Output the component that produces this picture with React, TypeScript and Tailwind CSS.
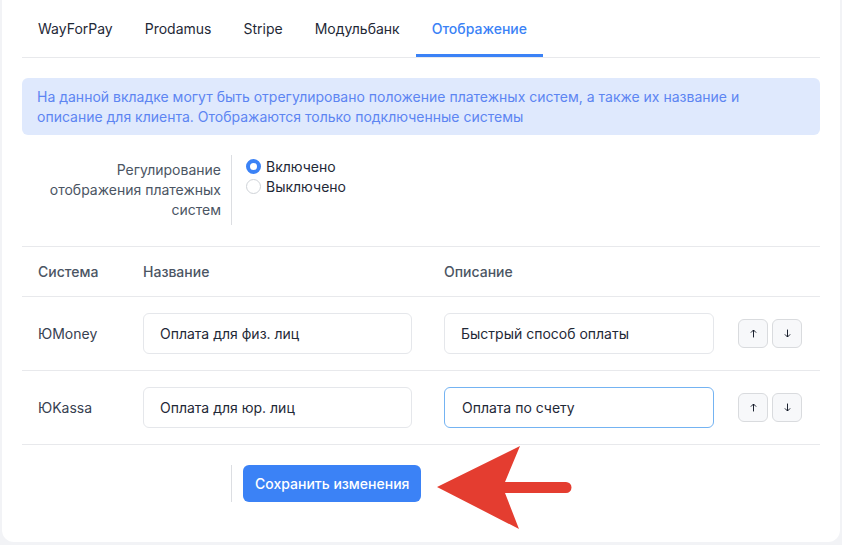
import { useState } from "react";

const tabs = ["WayForPay", "Prodamus", "Stripe", "Модульбанк", "Отображение"];

const rows = [
    { system: "ЮMoney", name: "Оплата для физ. лиц", desc: "Быстрый способ оплаты", focused: false },
    { system: "ЮKassa", name: "Оплата для юр. лиц", desc: "Оплата по счету", focused: true },
];

function Radio({ checked, label, onClick }: { checked: boolean; label: string; onClick: () => void }) {
    return (
        <label className="flex items-center gap-[5px] h-[20px] cursor-pointer" onClick={onClick}>
            <span
                className={
                    checked
                        ? "w-[15px] h-[15px] rounded-full border-[4px] border-[#3b82f6] bg-white"
                        : "w-[15px] h-[15px] rounded-full border border-[#cfd3d8] bg-white"
                }
            />
            <span className="text-[14px] text-[#1f2937]">{label}</span>
        </label>
    );
}

function MoveButton({ dir }: { dir: "up" | "down" }) {
    return (
        <button className="w-[30px] h-[29px] flex items-center justify-center rounded-md border border-[#d9dbde] bg-[#f7f8fa] text-[#111827]">
            <svg width="7" height="9" viewBox="0 0 8 10" fill="none" stroke="currentColor" strokeWidth="1.1">
                {dir === "up" ? (
                    <>
                        <path d="M4 9.5V1" />
                        <path d="M1 4l3-3 3 3" />
                    </>
                ) : (
                    <>
                        <path d="M4 0.5V9" />
                        <path d="M1 6l3 3 3-3" />
                    </>
                )}
            </svg>
        </button>
    );
}

export default function App() {
    const [enabled, setEnabled] = useState(true);

    return (
        <div
            className="min-h-screen bg-[#f2f3f6] px-[2px] pb-[3px]"
            style={{ fontFamily: "Inter, 'Noto Sans', sans-serif" }}
        >
            <div className="relative bg-white rounded-b-xl px-[20px] pb-[40px]">
                {/* Tabs */}
                <div className="flex border-b border-[#e8e9ec]">
                    {tabs.map((t) => {
                        const active = t === "Отображение";
                        return (
                            <div
                                key={t}
                                className={
                                    active
                                        ? "h-[57px] px-[16px] flex items-center border-b-[3px] border-[#3b82f6] pt-[3px] text-[14px] font-medium text-[#3b82f6]"
                                        : "h-[57px] px-[16px] flex items-center border-b-[3px] border-transparent pt-[3px] text-[14px] text-[#1f2937]"
                                }
                            >
                                {t}
                            </div>
                        );
                    })}
                </div>

                {/* Info */}
                <div className="mt-[20px] rounded-md bg-[#dfe9fd] px-[15px] py-[9px] text-[14px] leading-[19.5px] text-[#5d85f2]">
                    На данной вкладке могут быть отрегулировано положение платежных систем, а также их название и
                    описание для клиента. Отображаются только подключенные системы
                </div>

                {/* Setting */}
                <div className="flex mt-[20px]">
                    <div className="w-[210px] pr-[10px] py-[5px] border-r border-[#dcdee2] text-right text-[14px] leading-[20px] text-[#4b5563]">
                        Регулирование
                        <br />
                        отображения платежных
                        <br />
                        систем
                    </div>
                    <div className="pl-[14px] pt-[1px] flex flex-col">
                        <Radio checked={enabled} label="Включено" onClick={() => setEnabled(true)} />
                        <Radio checked={!enabled} label="Выключено" onClick={() => setEnabled(false)} />
                    </div>
                </div>

                {/* Table */}
                <div className="mt-[21px] border-t border-[#e8e9ec]">
                    <div className="grid grid-cols-[105px_301px_302px_92px] h-[50px] items-center border-b border-[#e8e9ec] text-[14px] font-medium text-[#4b5563]">
                        <div className="pl-[16px]">Система</div>
                        <div className="pl-[16px]">Название</div>
                        <div className="pl-[16px]">Описание</div>
                        <div />
                    </div>
                    {rows.map((r) => (
                        <div
                            key={r.system}
                            className="grid grid-cols-[105px_301px_302px_92px] h-[74px] items-center border-b border-[#e8e9ec] text-[14px] text-[#1f2937]"
                        >
                            <div className="pl-[16px] text-[#374151]">{r.system}</div>
                            <div className="px-[16px]">
                                <div className="h-[41px] flex items-center rounded-md border border-[#e5e7eb] px-[16px]">
                                    {r.name}
                                </div>
                            </div>
                            <div className="px-[16px]">
                                <div
                                    className={
                                        r.focused
                                            ? "h-[41px] flex items-center rounded-md border border-[#74b3f2] px-[17px]"
                                            : "h-[41px] flex items-center rounded-md border border-[#e5e7eb] px-[16px]"
                                    }
                                >
                                    {r.desc}
                                </div>
                            </div>
                            <div className="flex gap-[4px] pl-[8px]">
                                <MoveButton dir="up" />
                                <MoveButton dir="down" />
                            </div>
                        </div>
                    ))}
                </div>

                {/* Save */}
                <div className="flex mt-[20px]">
                    <div className="w-[210px] border-r border-[#dcdee2]" />
                    <div className="pl-[11px]">
                        <button className="h-[37px] px-[12px] rounded-md bg-[#3b82f6] text-white text-[14px] font-medium">
                            Сохранить изменения
                        </button>
                    </div>
                </div>

                {/* Arrow annotation */}
                <svg
                    className="absolute left-[433px] top-[445px]"
                    width="140"
                    height="86"
                    viewBox="433 445 140 86"
                >
                    <path d="M435 487 L518 446 L503 482 L564 482 A5.5 5.5 0 0 1 564 493 L503 493 L517 529 Z" fill="#e43d30" />
                </svg>
            </div>
        </div>
    );
}
